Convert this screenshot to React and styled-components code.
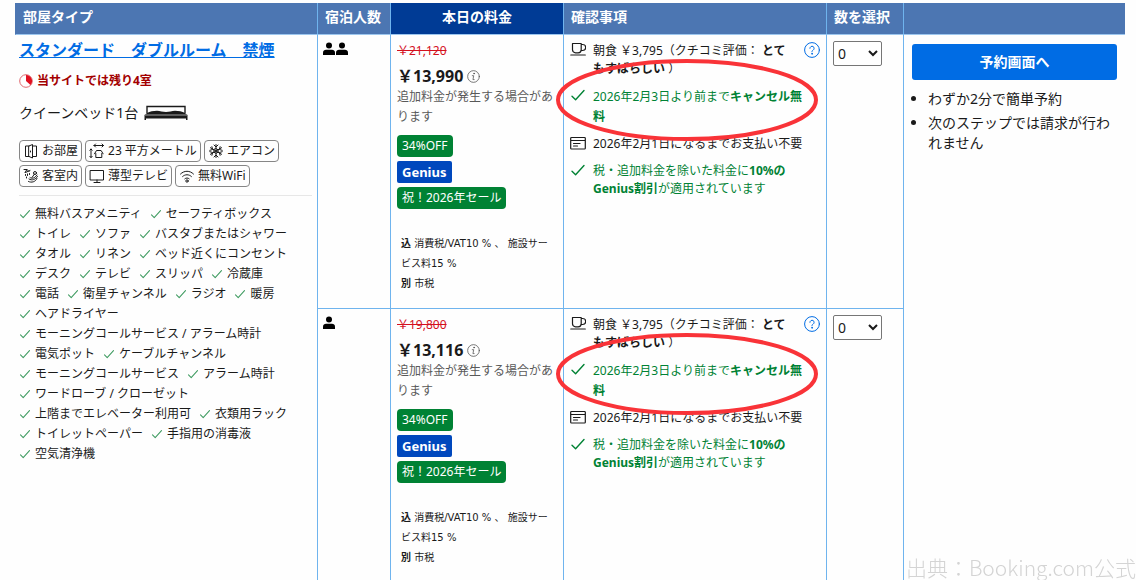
import styled, { createGlobalStyle } from "styled-components";

const amenities = [
  "無料バスアメニティ",
  "セーフティボックス",
  "トイレ",
  "ソファ",
  "バスタブまたはシャワー",
  "タオル",
  "リネン",
  "ベッド近くにコンセント",
  "デスク",
  "テレビ",
  "スリッパ",
  "冷蔵庫",
  "電話",
  "衛星チャンネル",
  "ラジオ",
  "暖房",
  "ヘアドライヤー",
  "モーニングコールサービス / アラーム時計",
  "電気ポット",
  "ケーブルチャンネル",
  "モーニングコールサービス",
  "アラーム時計",
  "ワードローブ / クローゼット",
  "上階までエレベーター利用可",
  "衣類用ラック",
  "トイレットペーパー",
  "手指用の消毒液",
  "空気清浄機",
];

const facilities = [
  { icon: DoorIcon, label: "お部屋" },
  { icon: SizeIcon, label: "23 平方メートル" },
  { icon: SnowIcon, label: "エアコン" },
  { icon: BathIcon, label: "客室内" },
  { icon: TvIcon, label: "薄型テレビ" },
  { icon: WifiIcon, label: "無料WiFi" },
];

const offers = [
  { id: "double", guests: 2, before: "￥21,120", price: "￥13,990" },
  { id: "single", guests: 1, before: "￥19,800", price: "￥13,116" },
];

function Line({ size = 16, children, ...rest }) {
  return (
    <svg
      width={size}
      height={size}
      viewBox="0 0 16 16"
      fill="none"
      stroke="currentColor"
      strokeWidth="1"
      strokeLinecap="round"
      strokeLinejoin="round"
      aria-hidden="true"
      {...rest}
    >
      {children}
    </svg>
  );
}

function DoorIcon() {
  return (
    <Line>
      <path d="M6 3H2.500v10.500H6M10 3h3.500v10.500H10M6 3l3.500-1.500v13.500L6 13.500z" />
      <path d="M7.500 8v1" />
    </Line>
  );
}

function SizeIcon() {
  return (
    <Line>
      <path d="M5 2.500h9.500M6.500 1 5 2.500 6.500 4M13 1l1.500 1.500L13 4M2 6v8.500M.8 7.200 2 6l1.200 1.200M.8 13.300 2 14.500l1.200-1.200" />
      <path d="M6.800 10.500v4h6v-4M5.500 10.800 7.500 7.500h4.600l2 3.300" />
    </Line>
  );
}

function SnowIcon() {
  return (
    <Line>
      <path d="M8 1.500v13M2.400 4.700l11.200 6.600M13.600 4.700 2.400 11.300" />
      <path d="M6 2 8 4l2-2M6 14l2-2 2 2M1.800 7.300l2.800-.8-.7-2.800M14.200 8.700l-2.800.8.7 2.800M1.800 8.700l2.800.8-.7 2.800M14.200 7.300l-2.800-.8.700-2.800M8 5.600l2.100 1.200v2.400L8 10.400 5.900 9.200V6.800z" />
    </Line>
  );
}

function BathIcon() {
  return (
    <Line>
      <path d="M1 1.500h3l2 2M2.500 4.500 7 2.500M4 1.500 2 4.500M2.500 6.500v1M4.500 6v1.500M3.500 9v1M6.500 5.500v1" />
      <path d="M7 9.500c2 1.500 4.500 1 7-2.500M6 11c3 2 6.500.5 8.500-2.500M5.500 13.500c3 1.500 7 .5 8.500-3M9 9.500l2.500-3.500" />
      <circle cx="12" cy="5" r="1.500" />
    </Line>
  );
}

function TvIcon() {
  return (
    <Line>
      <path d="M1.500 2.500h13v9.500h-13zM5 14.500h6M8 12v2.500" />
    </Line>
  );
}

function WifiIcon() {
  return (
    <Line>
      <path d="M1.500 6c3.700-3.700 9.300-3.700 13 0M3.600 8.500c2.500-2.400 6.300-2.400 8.800 0M5.800 10.800c1.300-1.100 3.100-1.100 4.400 0" />
      <circle cx="8" cy="13" r="1.200" />
    </Line>
  );
}

function CheckIcon({ size = 16 }) {
  return (
    <Line size={size} strokeWidth="1.400">
      <path d="M2 9.200 5.600 12.800 14 3.500" />
    </Line>
  );
}

function CupIcon() {
  return (
    <Line strokeWidth="1.200">
      <path d="M2.500 1.500h8.700v6.300a3 3 0 0 1-3 3H5.500a3 3 0 0 1-3-3zM11.200 2.500h1.500a2.500 2.500 0 0 1 0 6h-1.700M.8 13h14.500" />
    </Line>
  );
}

function CardIcon() {
  return (
    <Line strokeWidth="1.200">
      <path d="M1.500 2.500h13a.8.8 0 0 1 .8.8v9.900a.8.8 0 0 1-.8.8h-13a.8.8 0 0 1-.8-.8V3.300a.8.8 0 0 1 .8-.8zM.8 5.500h14.500M3.500 8.500h6.500M3.500 11h4" />
    </Line>
  );
}

function HelpIcon() {
  return (
    <Line>
      <circle cx="8" cy="8" r="7.400" />
      <path d="M5.900 6.300a2.100 2.100 0 1 1 3.200 1.800c-.8.5-1.100.8-1.100 1.700" />
      <circle cx="8" cy="11.800" r=".4" fill="currentColor" />
    </Line>
  );
}

function InfoIcon() {
  return (
    <Line size={13}>
      <circle cx="8" cy="8" r="7.200" />
      <path d="M6.500 7h1.800l-1 4.800h1.500" />
      <circle cx="8.700" cy="4.400" r=".6" fill="currentColor" />
    </Line>
  );
}

function TimerIcon() {
  return (
    <svg width="14" height="14" viewBox="0 0 14 14" aria-hidden="true">
      <circle cx="7" cy="7" r="6.300" fill="#fff" stroke="#e0686f" />
      <path d="M7 7V1a6 6 0 0 1 4.500 10z" fill="#e01020" />
    </svg>
  );
}

function BedIcon() {
  return (
    <svg width="44" height="16" viewBox="0 0 44 16" fill="#1a1a1a" aria-hidden="true">
      <path d="M3 8V1.500h38V8" fill="none" stroke="#1a1a1a" strokeWidth="1.400" />
      <path d="M3 8c3-1.500 6-2.300 10-2.300 3 0 6 1.300 9 1.300s6-1.300 9-1.300c4 0 7 .8 10 2.300l2.500 2v5H42v-1.500H2V15H.5v-5z" />
      <path d="M1 10h42" stroke="#fff" strokeWidth=".6" />
    </svg>
  );
}

function PersonIcon() {
  return (
    <svg width="12" height="14" viewBox="0 0 12 14" aria-hidden="true">
      <circle cx="6" cy="3.500" r="3" />
      <path d="M0 13v-2.500C0 8.500 1.500 7.700 3 7.700h6c1.500 0 3 .8 3 2.800V13z" />
    </svg>
  );
}

function Price({ before, price }) {
  return (
    <>
      <OldPrice>{before}</OldPrice>
      <CurrentPrice>
        {price}
        <InfoIcon />
      </CurrentPrice>
      <Note>追加料金が発生する場合があります</Note>
      <Badges>
        <Badge>34%OFF</Badge>
        <Badge $genius>Genius</Badge>
        <Badge>祝！2026年セール</Badge>
      </Badges>
      <Taxes>
        <p>
          <b>込</b> 消費税/VAT10 % 、 施設サービス料15 %
        </p>
        <p>
          <b>別</b> 市税
        </p>
      </Taxes>
    </>
  );
}

function Conditions() {
  return (
    <ConditionList>
      <Condition $withHelp>
        <CupIcon />
        <span>
          朝食 ￥3,795（クチコミ評価： <b>とてもすばらしい</b> ）
        </span>
        <HelpButton type="button" aria-label="朝食の詳細">
          <HelpIcon />
        </HelpButton>
      </Condition>
      <Condition $green $tall>
        <CheckIcon />
        <span>
          2026年2月3日より前まで<b>キャンセル無料</b>
        </span>
      </Condition>
      <Condition>
        <CardIcon />
        <span>2026年2月1日になるまでお支払い不要</span>
      </Condition>
      <Condition $green>
        <CheckIcon />
        <span>
          税・追加料金を除いた料金に<b>10%のGenius割引</b>が適用されています
        </span>
      </Condition>
      <Highlight viewBox="0 0 262 82" aria-hidden="true">
        <ellipse cx="131" cy="41" rx="129" ry="39" />
      </Highlight>
    </ConditionList>
  );
}

export default function App() {
  return (
    <>
      <GlobalStyle />
      <Page>
        <Table>
          <colgroup>
            <col />
            <Col $width={73} />
            <Col $width={173} />
            <Col $width={263} />
            <Col $width={77} />
            <Col $width={222} />
          </colgroup>
          <thead>
            <tr>
              <Th scope="col">部屋タイプ</Th>
              <Th scope="col">宿泊人数</Th>
              <Th scope="col" $today>
                本日の料金
              </Th>
              <Th scope="col">確認事項</Th>
              <Th scope="col">数を選択</Th>
              <Th as="td" />
            </tr>
          </thead>
          <tbody>
            {offers.map((offer, i) => (
              <tr key={offer.id}>
                {i === 0 && (
                  <RoomCell rowSpan={offers.length}>
                    <RoomName href="#room">スタンダード　ダブルルーム　禁煙</RoomName>
                    <Scarcity>
                      <TimerIcon />
                      当サイトでは残り4室
                    </Scarcity>
                    <Bed>
                      クイーンベッド1台
                      <BedIcon />
                    </Bed>
                    <Chips>
                      {facilities.map(({ icon: Icon, label }) => (
                        <Chip key={label}>
                          <Icon />
                          {label}
                        </Chip>
                      ))}
                    </Chips>
                    <Amenities>
                      {amenities.map((name) => (
                        <Amenity key={name}>
                          <CheckIcon size={12} />
                          {name}
                        </Amenity>
                      ))}
                    </Amenities>
                  </RoomCell>
                )}
                <GuestCell>
                  <Guests role="img" aria-label={`定員${offer.guests}名`}>
                    {Array.from({ length: offer.guests }, (_, n) => (
                      <PersonIcon key={n} />
                    ))}
                  </Guests>
                </GuestCell>
                <PriceCell>
                  <Price before={offer.before} price={offer.price} />
                </PriceCell>
                <ConditionCell>
                  <Conditions />
                </ConditionCell>
                <SelectCell>
                  <Select aria-label="部屋数" defaultValue="0">
                    <option>0</option>
                    <option>1</option>
                    <option>2</option>
                    <option>3</option>
                    <option>4</option>
                  </Select>
                </SelectCell>
                {i === 0 && (
                  <ReserveCell rowSpan={offers.length}>
                    <ReserveButton type="button">予約画面へ</ReserveButton>
                    <Points>
                      <li>わずか2分で簡単予約</li>
                      <li>次のステップでは請求が行われません</li>
                    </Points>
                  </ReserveCell>
                )}
              </tr>
            ))}
          </tbody>
        </Table>
        <Source>出典：Booking.com公式</Source>
      </Page>
    </>
  );
}

const GlobalStyle = createGlobalStyle`
  * {
    box-sizing: border-box;
  }

  body {
    margin: 0;
    background: #fefefe;
    color: #1a1a1a;
    font-family: "Noto Sans", "Noto Sans CJK JP", sans-serif;
    font-size: 12px;
    line-height: 20px;
  }

  p, ul {
    margin: 0;
    padding: 0;
  }

  svg {
    flex-shrink: 0;
  }
`;

const Page = styled.main`
  padding: 3px 11px 0 15px;
`;

const Table = styled.table`
  width: 100%;
  table-layout: fixed;
  border-collapse: separate;
  border-spacing: 0;
`;

const Col = styled.col`
  width: ${({ $width }) => $width}px;
`;

const Th = styled.th`
  height: 32px;
  padding: 0 7px 3px;
  background: ${({ $today }) => ($today ? "#003b95" : "#4c76b2")};
  color: #fff;
  border-left: 1px solid #6fb4ee;
  border-bottom: 1px solid #9cc6ee;
  font-size: 14px;
  font-weight: 700;
  line-height: 20px;
  text-align: ${({ $today }) => ($today ? "center" : "left")};
  white-space: nowrap;

  &:first-child {
    border-left-color: #4c76b2;
  }
`;

const Td = styled.td`
  vertical-align: top;
  border-left: 1px solid #6fb4ee;

  tr:not(:last-child) > & {
    border-bottom: 1px solid #6fb4ee;
  }
`;

const RoomCell = styled(Td)`
  padding: 4px 5px 0 3px;

  tr > && {
    border-color: transparent;
  }
`;

const RoomName = styled.a`
  display: block;
  color: #006ce4;
  font-size: 16px;
  font-weight: 700;
  line-height: 22px;
`;

const Scarcity = styled.p`
  display: flex;
  align-items: center;
  gap: 4px;
  margin-top: 10px;
  color: #a30000;
  font-weight: 700;
`;

const Bed = styled.p`
  display: flex;
  align-items: center;
  gap: 6px;
  margin-top: 12px;
  font-size: 14px;
`;

const Chips = styled.ul`
  display: flex;
  flex-wrap: wrap;
  gap: 3px;
  margin-top: 17px;
  padding-bottom: 8px;
  border-bottom: 1px solid #e7e7e7;
  list-style: none;
`;

const Chip = styled.li`
  display: flex;
  align-items: center;
  gap: 3px;
  height: 22px;
  padding: 0 3px;
  border: 1px solid #868686;
  border-radius: 4px;
`;

const Amenities = styled.ul`
  display: flex;
  flex-wrap: wrap;
  column-gap: 8px;
  margin-top: 8px;
  padding-right: 4px;
  list-style: none;
`;

const Amenity = styled.li`
  display: flex;
  align-items: center;
  gap: 4px;

  svg {
    color: #3d9a5f;
  }
`;

const GuestCell = styled(Td)`
  padding: 7px 5px;
`;

const Guests = styled.div`
  display: flex;
  gap: 1px;
`;

const PriceCell = styled(Td)`
  padding: 6px 6px 14px;
`;

const OldPrice = styled.del`
  display: block;
  color: #d4111e;
`;

const CurrentPrice = styled.p`
  display: flex;
  align-items: center;
  gap: 4px;
  margin-top: 4px;
  font-size: 16px;
  font-weight: 700;
  line-height: 22px;

  svg {
    color: #595959;
  }
`;

const Note = styled.p`
  color: #595959;
  margin-right: -6px;
`;

const Badges = styled.div`
  display: flex;
  flex-direction: column;
  align-items: flex-start;
  gap: 4px;
  margin-top: 8px;
`;

const Badge = styled.span`
  height: 22px;
  padding: 0 5px;
  border-radius: ${({ $genius }) => ($genius ? 2 : 4)}px;
  background: ${({ $genius }) => ($genius ? "#0048bd" : "#008234")};
  color: #fff;
  font-size: ${({ $genius }) => ($genius ? 13 : 12)}px;
  font-weight: ${({ $genius }) => ($genius ? 700 : 400)};
  line-height: 22px;
  white-space: nowrap;
`;

const Taxes = styled.div`
  margin: 25px 0 0 4px;
  font-family: "DejaVu Sans", "Noto Sans CJK JP", sans-serif;
  font-size: 10px;
`;

const ConditionCell = styled(Td)`
  padding: 7px 6px 0;
`;

const ConditionList = styled.ul`
  position: relative;
  list-style: none;
`;

const Condition = styled.li`
  display: flex;
  align-items: flex-start;
  gap: 7px;
  margin-bottom: ${({ $tall }) => ($tall ? 8 : 9)}px;
  padding-right: ${({ $withHelp }) => ($withHelp ? 0 : 16)}px;
  color: ${({ $green }) => ($green ? "#008234" : "#1a1a1a")};
  line-height: ${({ $tall }) => ($tall ? 20 : 18)}px;

  > span {
    flex: 1;
    padding-right: ${({ $withHelp }) => ($withHelp ? 8 : 0)}px;
  }
`;

const HelpButton = styled.button`
  display: flex;
  padding: 0;
  border: 0;
  background: none;
  color: #006ce4;
  cursor: pointer;
`;

/* hand-drawn style ring around the free cancellation line */
const Highlight = styled.svg`
  position: absolute;
  top: 17px;
  left: -14px;
  width: 262px;
  height: 82px;
  overflow: visible;
  fill: none;
  stroke: #f93338;
  stroke-width: 4;
  pointer-events: none;
`;

const SelectCell = styled(Td)`
  padding: 6px;
`;

const Select = styled.select`
  display: block;
  width: 49px;
  height: 25px;
  border: 1px solid #767676;
  border-radius: 2px;
  background: #fff;
  color: #1a1a1a;
  font: inherit;
  font-size: 14px;
`;

const ReserveCell = styled(Td)`
  padding: 9px 8px;

  tr > && {
    border-bottom-color: transparent;
  }
`;

const ReserveButton = styled.button`
  display: block;
  width: 100%;
  height: 36px;
  border: 0;
  border-radius: 3px;
  background: #006ce4;
  color: #fff;
  font: inherit;
  font-size: 14px;
  font-weight: 700;
  cursor: pointer;
`;

const Points = styled.ul`
  margin-top: 9px;
  padding-left: 16px;
  font-size: 14px;

  li + li {
    margin-top: 4px;
  }
`;

const Source = styled.p`
  position: fixed;
  right: 0;
  bottom: 0;
  color: #d4d4d4;
  font-family: "Noto Sans CJK JP", sans-serif;
  font-size: 21px;
  font-weight: 300;
  line-height: 26px;
`;
